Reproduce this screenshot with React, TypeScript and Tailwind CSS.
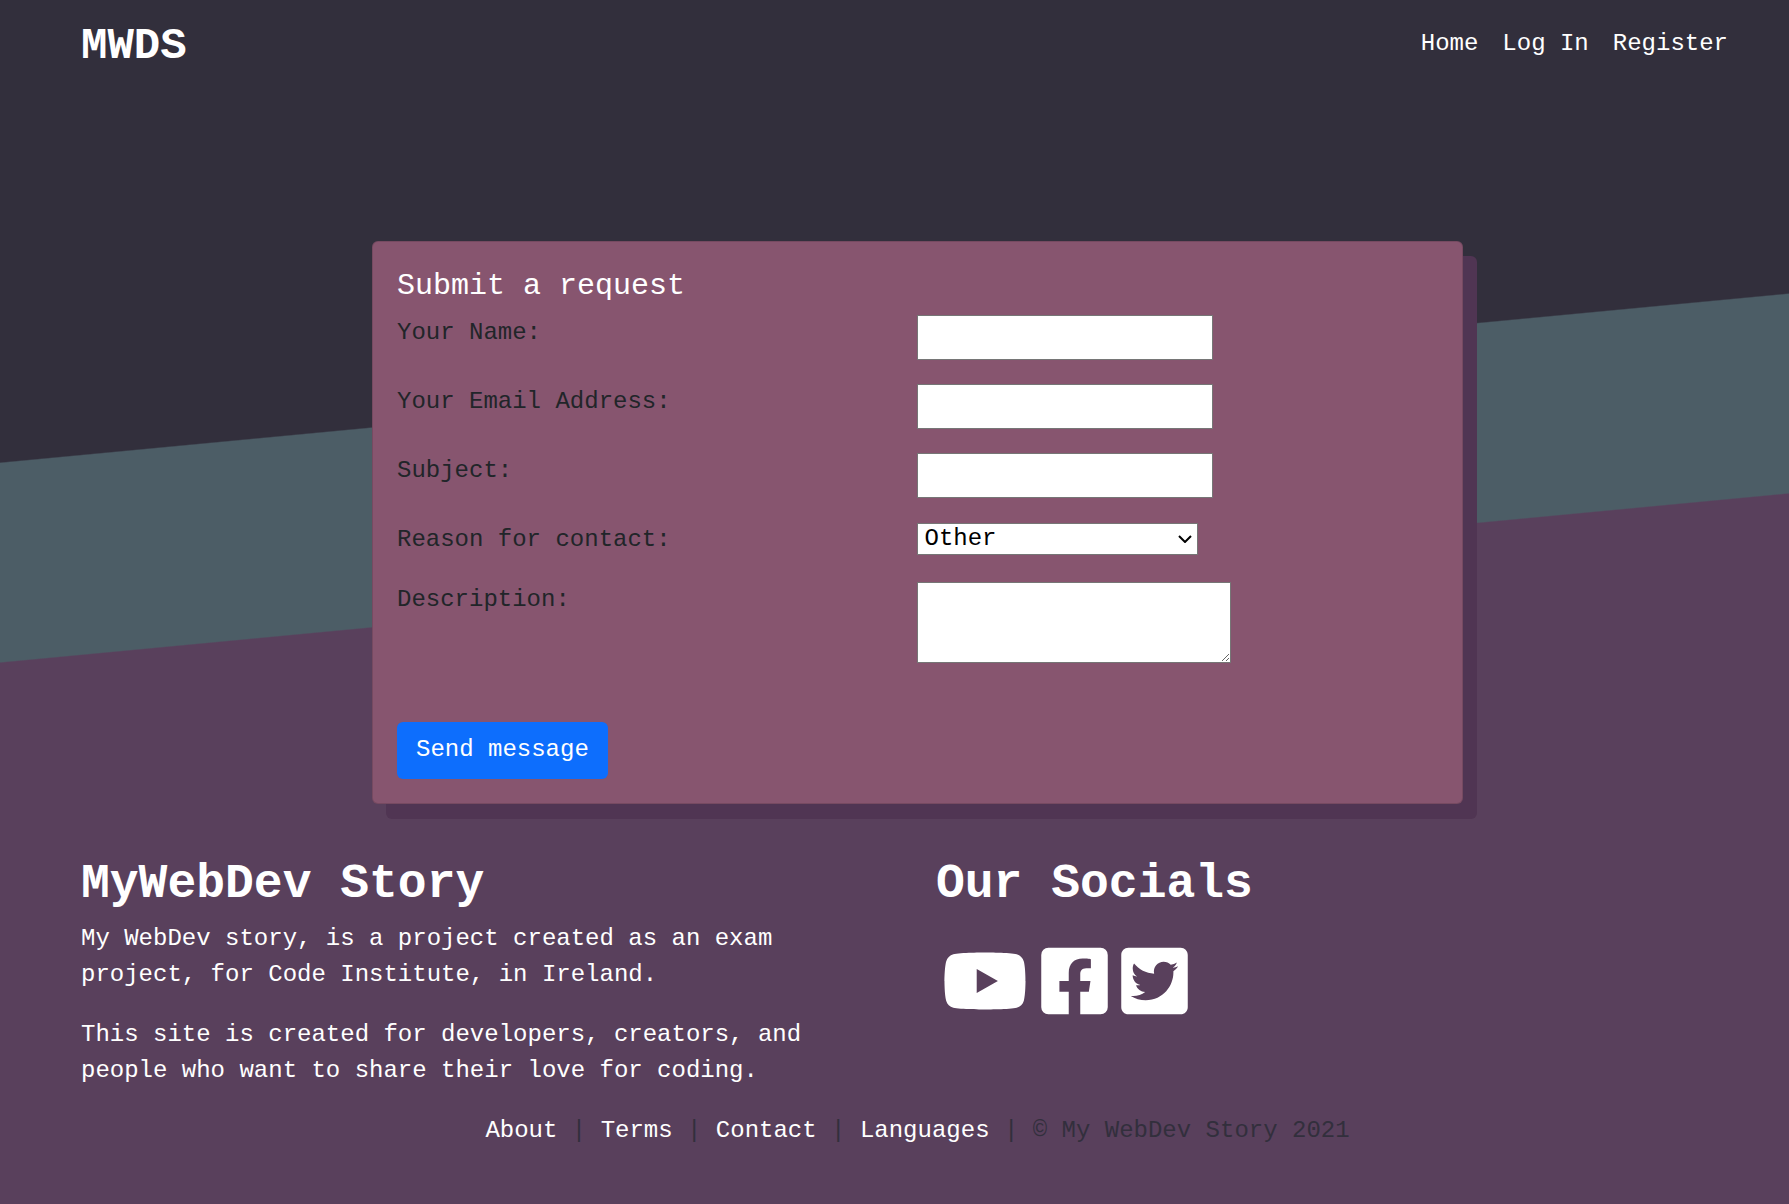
import { FaFacebookSquare, FaTwitterSquare, FaYoutube } from "react-icons/fa";

const navLinks = ["Home", "Log In", "Register"];
const footerLinks = ["About", "Terms", "Contact", "Languages"];
const textFields = [
  { id: "name", label: "Your Name:", type: "text" },
  { id: "email", label: "Your Email Address:", type: "email" },
  { id: "subject", label: "Subject:", type: "text" },
];

function Header() {
  return (
    <header className="flex items-start justify-between pt-[18px] pr-[61px] pl-[81px] text-white">
      <a href="#home" className="text-[44px] leading-[56px] font-bold">
        MWDS
      </a>
      <nav className="flex gap-6 pt-2">
        {navLinks.map((link) => (
          <a key={link} href="#nav">
            {link}
          </a>
        ))}
      </nav>
    </header>
  );
}

function RequestForm() {
  return (
    <form
      className="w-full max-w-[1091px] rounded-md border border-black/12 bg-[#87556f] p-6 shadow-[14px_15px_0_#503553]"
      onSubmit={(event) => event.preventDefault()}
    >
      <h1 className="mb-[9px] text-[30px] leading-10 text-white">Submit a request</h1>
      {textFields.map((field) => (
        <div key={field.id} className="mb-6 grid grid-cols-2 items-start">
          <label htmlFor={field.id}>{field.label}</label>
          <input
            id={field.id}
            type={field.type}
            className="-ml-px h-[45px] w-full max-w-[296px] border border-[#767676] bg-white px-1 text-black"
          />
        </div>
      ))}
      <div className="mb-6 grid grid-cols-2 items-start">
        <label htmlFor="reason">Reason for contact:</label>
        <div className="relative mt-px -ml-px w-full max-w-[281px]">
          <select
            id="reason"
            defaultValue="Other"
            className="block h-8 w-full appearance-none border border-[#767676] bg-white pr-7 pl-[7px] leading-7 text-black"
          >
            <option>Other</option>
            <option>Account</option>
            <option>Feedback</option>
          </select>
          <svg
            viewBox="0 0 14 8"
            className="pointer-events-none absolute top-3 right-1.5 h-2 w-3.5"
            fill="none"
            stroke="black"
            strokeWidth="2"
            aria-hidden="true"
          >
            <path d="M1 1l6 6 6-6" />
          </svg>
        </div>
      </div>
      <div className="mb-[59px] grid grid-cols-2 items-start">
        <label htmlFor="description">Description:</label>
        <textarea
          id="description"
          className="-ml-px h-[81px] w-full max-w-[314px] border border-[#767676] bg-white p-0.5 text-black"
        />
      </div>
      <button type="submit" className="block h-[57px] rounded-md bg-[#0d6efd] px-[19px] pb-0.5 text-white">
        Send message
      </button>
    </form>
  );
}

function Footer() {
  return (
    <footer className="pt-[51px]">
      <div className="grid grid-cols-2 gap-12 pr-[46px] pl-[81px] text-white">
        <section>
          <h2 className="mb-2 text-5xl leading-[58px] font-bold">MyWebDev Story</h2>
          <p className="mb-6">
            My WebDev story, is a project created as an exam project, for Code Institute, in Ireland.
          </p>
          <p className="mb-6">
            This site is created for developers, creators, and people who want to share their love for coding.
          </p>
        </section>
        <section>
          <h2 className="mb-2 text-5xl leading-[58px] font-bold">Our Socials</h2>
          <div className="flex gap-[13px] pt-[22px] pl-1.5">
            <a href="#youtube" aria-label="YouTube">
              <FaYoutube className="h-[76px] w-[86px]" />
            </a>
            <a href="#facebook" aria-label="Facebook">
              <FaFacebookSquare className="h-[76px] w-[67px]" />
            </a>
            <a href="#twitter" aria-label="Twitter">
              <FaTwitterSquare className="h-[76px] w-[67px]" />
            </a>
          </div>
        </section>
      </div>
      <p className="pl-[46px] text-center text-[#322f3c]">
        {footerLinks.map((link) => (
          <span key={link}>
            <a href="#footer" className="text-white">
              {link}
            </a>
            {" | "}
          </span>
        ))}
        © My WebDev Story 2021
      </p>
    </footer>
  );
}

export default function App() {
  return (
    <div className="min-h-screen bg-[linear-gradient(174.6deg,#322f3c_33.65%,#4c5d66_33.75%,#4c5d66_48.2%,#59405c_48.3%)] font-['Liberation_Mono',monospace] text-2xl leading-9 text-[#212529]">
      <Header />
      <main className="flex justify-center pt-[167px] pl-[46px]">
        <RequestForm />
      </main>
      <Footer />
    </div>
  );
}
